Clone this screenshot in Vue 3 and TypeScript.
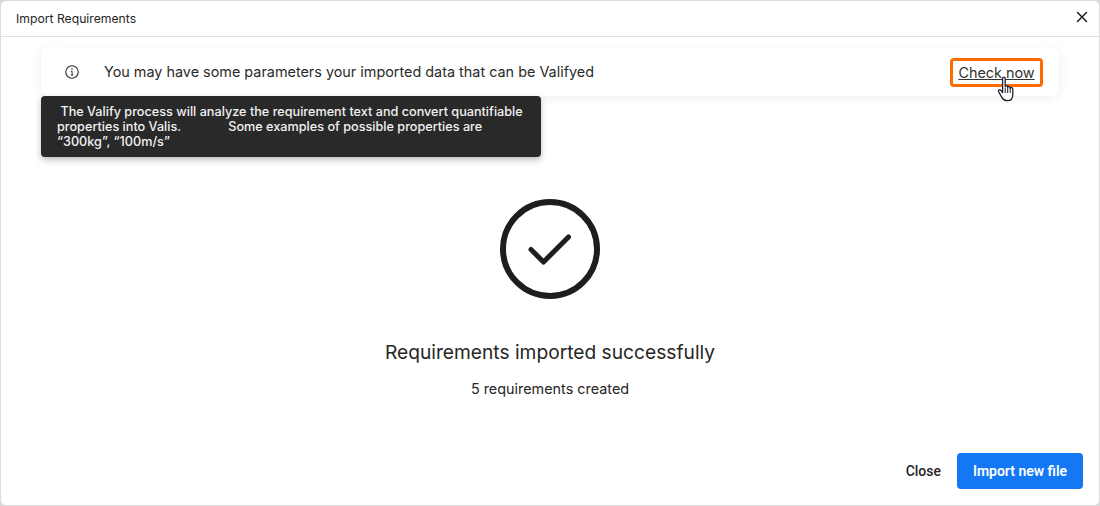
<script setup lang="ts">
const created: number = 5
const tipText: string =
  " The Valify process will analyze the requirement text and convert quantifiable properties into Valis.              Some examples of possible properties are “300kg”, “100m/s”"
</script>

<template>
  <div class="dialog">
    <header class="head">
      <span class="title">Import Requirements</span>
      <button class="close-x" aria-label="Close">
        <svg width="12" height="12" viewBox="0 0 12 12"><path d="M1.500 1.500l9 9M10.500 1.500l-9 9" stroke="#1f1f1f" stroke-width="1.5" fill="none" stroke-linecap="round"/></svg>
      </button>
    </header>
    <main class="body">
      <div class="banner">
        <svg class="info" width="16" height="16" viewBox="0 0 16 16" fill="none">
          <circle cx="8" cy="8" r="6.25" stroke="#2a2a2a" stroke-width="1.1"/>
          <path d="M6.9 7.3H8.1V11M6.8 11H9.3" stroke="#2a2a2a" stroke-width="1"/>
          <circle cx="8" cy="5.1" r=".75" fill="#2a2a2a"/>
        </svg>
        <span class="banner-text">You may have some parameters your imported data that can be Valifyed</span>
        <a class="check">Check now</a>
        <svg class="cursor" width="20" height="26" viewBox="0 0 20 26">
          <path d="M5.600 2.400C5.600 .8 8.200 .8 8.200 2.400V10.500C8.200 9.300 10.700 9.300 10.700 10.600V11.400C10.700 10.200 13.200 10.200 13.200 11.600V12.400C13.200 11.200 15.800 11.200 15.800 12.800V18.500C15.800 22 14 24.700 10.300 24.700C7.200 24.700 6 23.500 4.800 21.400L1.600 15.700C.8 14.200 2.600 13 3.800 14.400L5.600 16.500Z" fill="#fff" stroke="#1c2230" stroke-width="1.300" stroke-linejoin="round"/>
          <path d="M8.200 11.500V17M10.700 11.500V17M13.200 12.500V17" stroke="#1c2230" stroke-width="1"/>
        </svg>
      </div>
      <div class="tip">{{ tipText }}</div>
      <div class="result">
        <svg width="100" height="100" viewBox="0 0 100 100" fill="none">
          <circle cx="50" cy="50" r="47" stroke="#1e1e1e" stroke-width="6"/>
          <path d="M31 50.500L43.500 63L68.500 38" stroke="#1e1e1e" stroke-width="5" stroke-linecap="round" stroke-linejoin="round"/>
        </svg>
        <h2 class="done">Requirements imported successfully</h2>
        <p class="count">{{ created }} requirements created</p>
      </div>
    </main>
    <footer class="foot">
      <button class="btn-text">Close</button>
      <button class="btn-primary">Import new file</button>
    </footer>
  </div>
</template>

<style>
html, body { margin: 0; background: #d9d9d9; }
</style>

<style scoped>
.dialog {
  width: 1100px; height: 506px; box-sizing: border-box; background: #fff;
  border: 1px solid #dcdcdc; border-radius: 6px; display: flex; flex-direction: column;
  font-family: Inter, "Liberation Sans", sans-serif; color: #1f1f1f; overflow: hidden;
}
.head {
  height: 36px; box-sizing: border-box; flex: none; padding: 0 10px 0 15px;
  border-bottom: 1px solid #e0e0e0; display: flex; align-items: center; justify-content: space-between;
}
.title { font-size: 12.200px; color: #262626; }
.close-x { border: 0; background: none; padding: 0; width: 12px; height: 12px; display: flex; margin-right: 1px; margin-top: -3px; }
.body { flex: 1; position: relative; display: flex; flex-direction: column; padding: 10px 40px 0; min-height: 0; }
.banner {
  position: relative; height: 49px; flex: none; box-sizing: border-box; display: flex; align-items: center;
  border-radius: 8px; background: #fff; box-shadow: 0 2px 12px rgba(0,0,0,.07); padding: 0 16px 0 23px;
}
.info { flex: none; }
.banner-text { margin-left: 24px; font-size: 14.400px; color: #2b2b2b; flex: 1; }
.check {
  font-size: 14.400px; color: #333; text-decoration: underline; height: 29px; line-height: 23px;
  border: 3px solid #ff6a00; border-radius: 4px; box-sizing: border-box; width: 93px; text-align: center; margin-top: 1px;
}
.cursor { position: absolute; left: 956px; top: 29px; }
.tip {
  position: absolute; left: 40px; top: 59px; width: 500px; height: 61px; box-sizing: border-box;
  padding: 7.500px 16px 0; background: #292929; border-radius: 4px; color: #f2f2f2;
  font-size: 12.660px; font-weight: 500; line-height: 15px; white-space: pre-wrap; box-shadow: 0 3px 6px rgba(0,0,0,.25);
}
.result { flex: 1; display: flex; flex-direction: column; align-items: center; padding-top: 103px; }
.done { margin: 41px 0 0; font-size: 19.200px; font-weight: 400; line-height: 25px; color: #262626; }
.count { margin: 15px 0 0; font-size: 14.400px; line-height: 18px; color: #262626; }
.foot { flex: none; height: 52px; display: flex; justify-content: flex-end; align-items: flex-start; gap: 16px; padding-right: 16px; }
.btn-text { border: 0; background: none; font: 500 14px Roboto, sans-serif; color: #262626; height: 36px; padding: 0; }
.btn-primary { border: 0; background: #1478f5; color: #fff; font: 600 14px Roboto, sans-serif; height: 36px; width: 126px; border-radius: 4px; }
</style>
